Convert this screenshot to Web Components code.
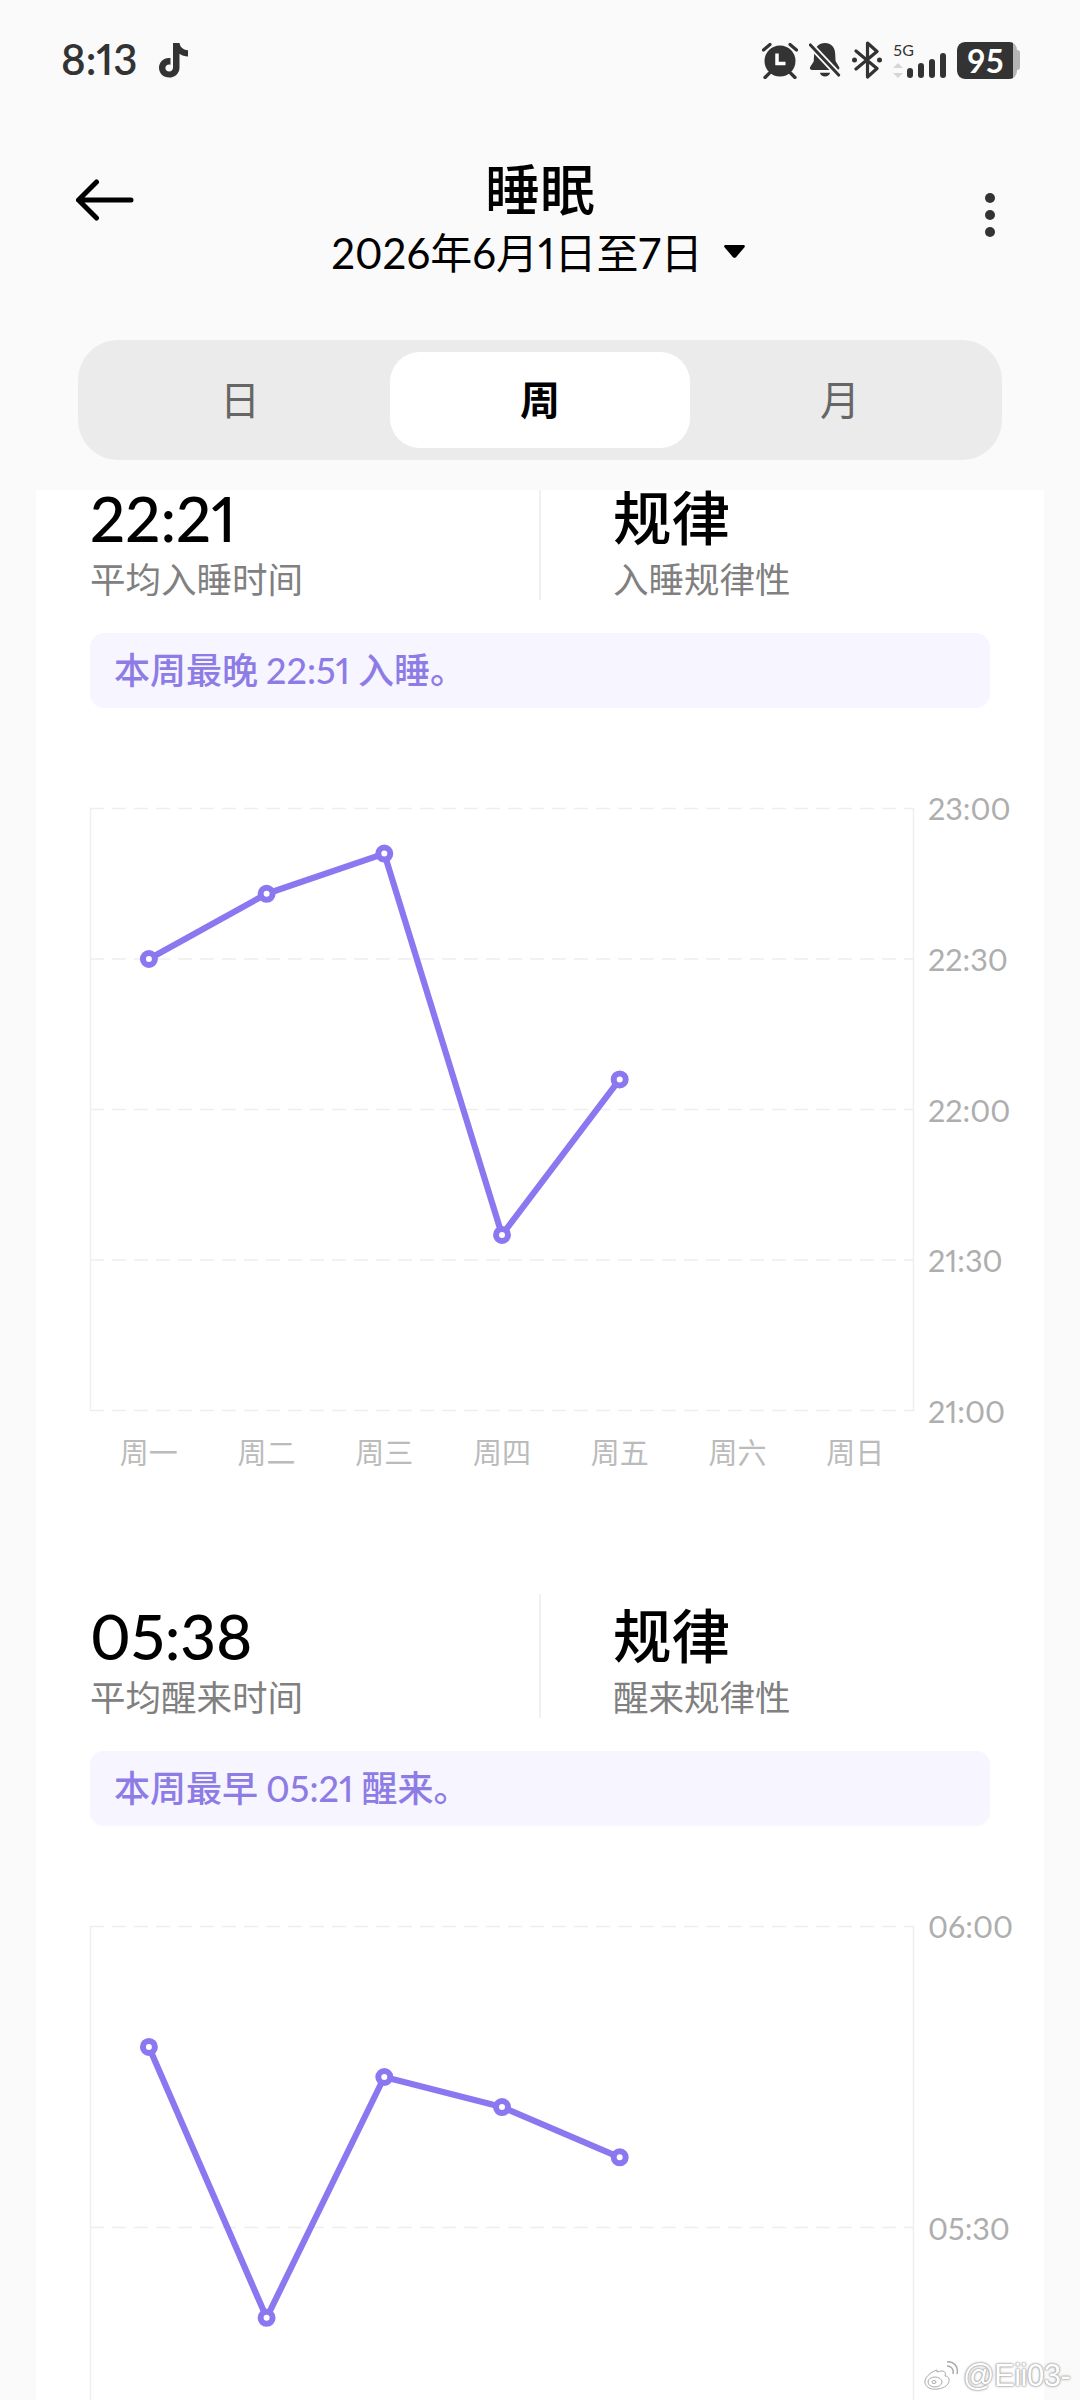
<!DOCTYPE html>
<html lang="zh"><head><meta charset="utf-8"><title>睡眠</title>
<style>
html,body{margin:0;padding:0;background:#fafafa}
body{width:1080px;height:2400px;overflow:hidden;position:relative;font-family:"Lato","Noto Sans CJK SC",sans-serif;color:#000;display:flex;flex-direction:column}
</style></head><body>
<status-bar></status-bar>
<app-header title="睡眠" sub="2026年6月1日至7日"></app-header>
<seg-tabs></seg-tabs>
<scroll-view>
  <sleep-section style="margin-top:-14px" value="22:21" label="平均入睡时间" kind="入睡规律性"
    note="本周最晚 22:51 入睡。" ticks="23:00,22:30,22:00,21:30,21:00" top="1380" bottom="1260" pts="1350,1363,1371,1295,1326"></sleep-section>
  <sleep-section value="05:38" label="平均醒来时间" kind="醒来规律性"
    note="本周最早 05:21 醒来。" ticks="06:00,05:30,05:00" top="360" bottom="300" pts="348,321,345,342,337"></sleep-section>
</scroll-view>
<wei-mark></wei-mark>
<script>
const def=(name,html,init)=>customElements.define(name,class extends HTMLElement{
  constructor(){super();this.attachShadow({mode:'open'})}
  connectedCallback(){this.shadowRoot.innerHTML=typeof html==='function'?html(this):html;init&&init(this)}
});
const FONT='"Lato","Noto Sans CJK SC",sans-serif';
def('status-bar',`<style>
:host{display:flex;align-items:center;padding:0 60px 0 61px;box-sizing:border-box;color:#333;flex:none;height:120px}
.t{font:600 42px/1 ${FONT};font-feature-settings:"pnum" 1;color:#333;width:97px;position:relative;top:-1px}
svg{display:block;fill:#333}
.r{margin-left:auto;display:flex;align-items:center;height:38px}
.bat{width:60px;height:37px;background:#b5b5b5;border-radius:8px;overflow:hidden;margin-left:10px}
.fill{width:56px;height:37px;background:#333;color:#fff;font:700 32px/37px ${FONT};text-align:center;border-radius:8px 0 0 8px;padding-left:1px;box-sizing:border-box}
.nub{width:3px;height:20px;background:#b5b5b5;border-radius:0 4px 4px 0}
</style>
<span class="t">8:13</span>
<svg width="32" height="36" viewBox="0 0 32 36"><path d="M15 1h6.500c.6 4 3.200 6.600 8.500 7.200v6.300c-3.300 0-6-.9-8.500-2.700v13.700c0 6-4.500 10.100-10.300 10.100C5.200 35.600 1 31.300 1 25.800c0-6.200 5.400-10.800 11.500-9.700v6.600c-2.800-.8-5.100 1-5.100 3.200 0 2 1.700 3.500 3.700 3.500 2.300 0 3.900-1.600 3.900-4z"/></svg>
<div class="r">
<svg width="36" height="38" viewBox="0 0 36 38"><circle cx="18" cy="20" r="15.500"/><path d="M15 12.500v10h8.500" fill="none" stroke="#fff" stroke-width="3.500"/><path d="M1.500 9 8 3.500M34.500 9 28 3.500M3 36.500l4.500-4.500M33 36.500 28.500 32" fill="none" stroke="#333" stroke-width="3.200" stroke-linecap="round"/></svg>
<svg width="32" height="38" viewBox="0 0 34 38" style="margin-left:11px"><path d="M17 1c6.500 0 10.600 4.500 10.800 11l.4 8 3.800 6.500c.8 1.500 0 3-1.800 3H3c-1.800 0-2.600-1.500-1.800-3L5 20.500l.5-8.500C5.800 5.500 10.500 1 17 1zM11.500 32.500h11c-.6 2.600-2.900 4-5.500 4s-4.900-1.400-5.500-4z"/><path d="M1.500 3 31.500 35" stroke="#fafafa" stroke-width="7"/><path d="M1.500 3 31.500 35" stroke="#333" stroke-width="3.200" stroke-linecap="round"/></svg>
<svg width="30" height="38" viewBox="0 0 30 38" style="margin-left:11px"><path d="M4 10 25 27.500 15.500 36V2L25 10.500 4 28" fill="none" stroke="#333" stroke-width="3.200" stroke-linejoin="round" stroke-linecap="round"/><circle cx="2.500" cy="19" r="2.500"/><circle cx="27.500" cy="19" r="2.500"/></svg>
<svg width="54" height="38" viewBox="0 0 54 38" style="margin-left:11px"><text x="0" y="15" style="font:700 19px ${FONT};fill:#333">5G</text><path d="M5 22l5 5H0zM5 37l5-5H0z" fill="#d6d6d6"/><rect x="14" y="27" width="6" height="10" rx="3"/><rect x="25" y="22" width="6" height="15" rx="3"/><rect x="36" y="18" width="6" height="19" rx="3"/><rect x="47" y="12" width="6" height="25" rx="3"/></svg>
<div class="bat"><div class="fill">95</div></div><div class="nub"></div>
</div>`);
def('app-header',h=>`<style>
:host{display:grid;grid-template-columns:1fr auto 1fr;height:220px;align-items:start;flex:none;box-sizing:border-box;padding-top:36px}
.c{display:flex;flex-direction:column;align-items:center}
.ti{font:500 55px/66px ${FONT}}
.su{font:400 42px/54px ${FONT};font-feature-settings:"pnum" 1;display:flex;align-items:center;gap:21px;margin:4px 0 0 0;position:relative;left:-2px}
.tr{width:21px;height:13px;display:block;position:relative;top:-2px}
.b{padding:23px 0 0 74px}.m{justify-self:end;padding:37px 85px 0 0}
svg{display:block}
</style>
<div class="b"><svg width="60" height="42" viewBox="0 0 60 42"><path d="M57 21H4.500M22.500 3 4.500 21l18 18" fill="none" stroke="#000" stroke-width="5" stroke-linecap="round" stroke-linejoin="round"/></svg></div>
<div class="c"><div class="ti">${h.getAttribute('title')}</div><div class="su"><span>${h.getAttribute('sub')}</span><svg class="tr" viewBox="0 0 21 13"><path d="M1.500 0h18c1.200 0 1.800 1.300 1 2.200l-8.500 10a2.600 2.600 0 0 1-3 0L.500 2.200C-.3 1.300.3 0 1.500 0z"/></svg></div></div>
<div class="m"><svg width="10" height="44" viewBox="0 0 10 44" fill="#333"><circle cx="5" cy="5" r="5"/><circle cx="5" cy="22" r="5"/><circle cx="5" cy="39" r="5"/></svg></div>`);
def('seg-tabs',`<style>
:host{display:grid;grid-template-columns:repeat(3,1fr);margin:0 78px;height:120px;box-sizing:border-box;padding:12px;background:#ebebeb;border-radius:40px;flex:none}
div{display:flex;align-items:center;justify-content:center;font:400 40px/1 ${FONT};color:#666;border-radius:30px}
.on{background:#fff;color:#000;font-weight:700}
</style><div>日</div><div class="on">周</div><div>月</div>`);
def('scroll-view',`<style>
:host{display:block;margin:30px 36px 0;background:#fff;overflow:hidden;flex:1;min-height:0}
</style><slot></slot>`);
def('sleep-section',h=>{const a=n=>h.getAttribute(n);return `<style>
:host{display:block;padding:0 54px;height:1118px;box-sizing:border-box}
.st{display:grid;grid-template-columns:449px 1fr;height:119px}
.st>div{display:flex;flex-direction:column}
.st>div+div{border-left:2px solid #f0f0f0;padding-left:72px}
.v{font:500 62px/84px ${FONT};font-feature-settings:"pnum" 1;height:84px}
.cj{font:500 58.500px/82px ${FONT};height:84px}
.l{font:400 35.500px/40px ${FONT};color:#808080}
.n{margin-top:38px;height:75px;background:#f7f5ff;border-radius:14px;padding:0 24px;font:500 36px/74px ${FONT};font-feature-settings:"pnum" 1;word-spacing:-1px;color:#8e7ce6}
line-chart{margin-top:100px}
</style>
<div class="st"><div><div class="v">${a('value')}</div><div class="l">${a('label')}</div></div><div><div class="cj">规律</div><div class="l">${a('kind')}</div></div></div>
<div class="n">${a('note')}</div>
<line-chart ticks="${a('ticks')}" top="${a('top')}" bottom="${a('bottom')}" pts="${a('pts')}"></line-chart>`});
def('line-chart',h=>{
 const a=n=>h.getAttribute(n),W=824,H=603,top=+a('top'),bot=+a('bottom');
 const ticks=a('ticks').split(','),pts=a('pts').split(',').map(Number);
 const X=i=>W/7*(i+.5),Y=v=>(top-v)/(top-bot)*(H-1)+.5;
 const lines=ticks.map((_,i)=>{const y=i/(ticks.length-1)*(H-1)+.5;return `<line x1="0" x2="${W}" y1="${y}" y2="${y}" stroke="#eeeeee" stroke-width="1.300" stroke-dasharray="14 8"/>`}).join('');
 const path=pts.map((v,i)=>X(i).toFixed(1)+','+Y(v).toFixed(1)).join(' ');
 const dots=pts.map((v,i)=>`<circle cx="${X(i).toFixed(1)}" cy="${Y(v).toFixed(1)}" r="6" fill="#fff" stroke="#8b78f0" stroke-width="6"/>`).join('');
 return `<style>
:host{display:grid;grid-template-columns:${W}px 76px;grid-template-rows:${H}px auto;font-family:${FONT}}
svg{display:block;overflow:visible}
.y{display:flex;flex-direction:column;justify-content:space-between;margin:-20px 0;padding-left:14px;font:400 30.500px/40px ${FONT};font-feature-settings:"pnum" 1;color:#aeaeae;white-space:nowrap}
.x{display:grid;grid-template-columns:repeat(7,1fr);text-align:center;font:400 29px/40px ${FONT};color:#bbb;padding-top:22px}
</style>
<svg width="${W}" height="${H}" viewBox="0 0 ${W} ${H}"><path d="M.5 0V${H}M${W-.5} 0V${H}" stroke="#efefef" stroke-width="1.500" fill="none"/>${lines}<polyline points="${path}" fill="none" stroke="#8b78f0" stroke-width="6.200" stroke-linejoin="round"/>${dots}</svg>
<div class="y">${ticks.map(t=>`<span>${t}</span>`).join('')}</div>
<div class="x">${['周一','周二','周三','周四','周五','周六','周日'].map(t=>`<span>${t}</span>`).join('')}</div>`});
def('wei-mark',`<style>
:host{position:absolute;left:923px;top:2358px;display:flex;align-items:center;gap:4px;height:36px}
span{font:400 31px/36px "Liberation Sans",sans-serif;color:#fff;text-shadow:0 0 2px #999,0 0 3px #aaa,0 0 1px #888;letter-spacing:-.5px}
svg{display:block}
</style><svg width="36" height="30" viewBox="0 0 36 30"><path d="M14 9C7 11 1 17 2 22c1 5 7 7 13 6 7-1 12-5 11-10-.5-2-2-3-4-3 1-3 0-5-3-5-1.500 0-3 .5-5 1z" fill="#fff" stroke="#aaa" stroke-width="1"/><ellipse cx="12" cy="21" rx="7" ry="5" fill="none" stroke="#aaa"/><ellipse cx="11" cy="21" rx="2" ry="1.500" fill="none" stroke="#aaa"/><path d="M24 5c4 0 7 3 6 8M24 1c6-1 12 4 10 12" fill="none" stroke="#aaa" stroke-width="1.500"/></svg><span>@Eii03-</span>`);
</script>
</body></html>
